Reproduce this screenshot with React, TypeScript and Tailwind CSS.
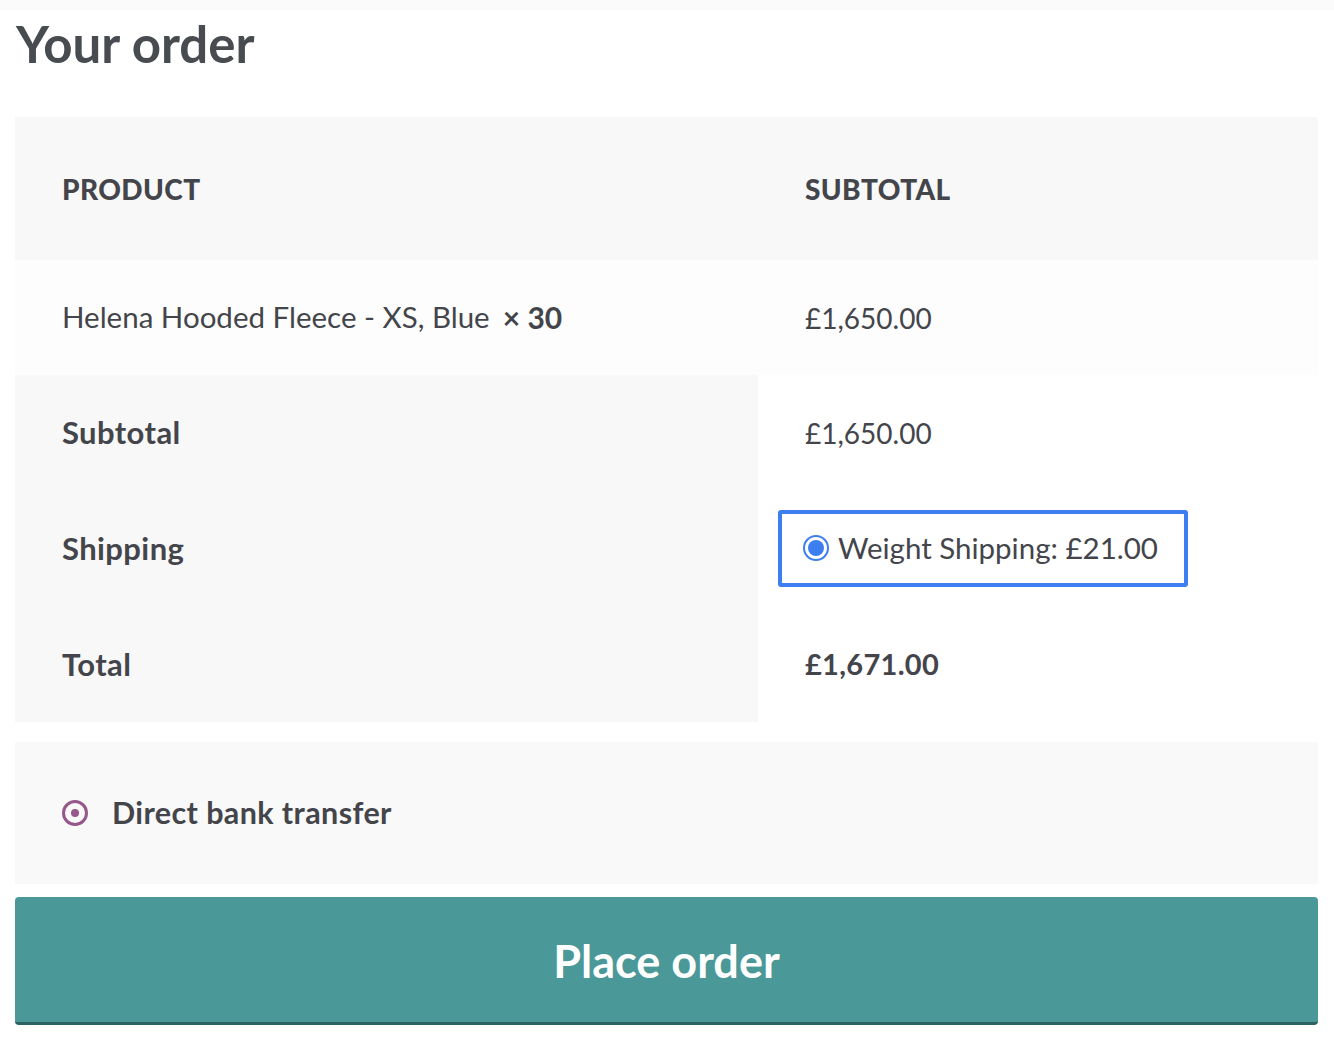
import React from "react";

export default function App() {
  const font = { fontFamily: "Lato, 'Noto Sans', sans-serif" };
  return (
    <div className="w-[1334px] h-[1042px] bg-white text-[#43454b]" style={font}>
      <div className="h-[10px] bg-[#fbfbfb]" />
      <div className="pl-[15px] pr-[16px]">
        <div className="h-[107px]">
          <h1 className="text-[51px] font-bold leading-none pt-[8px] pl-[1px] text-[#484c51]">Your order</h1>
        </div>
        <div className="grid grid-cols-[743px_1fr]">
          <div className="h-[143px] bg-[#f8f8f8] flex items-center pl-[47px] text-[28px] font-black tracking-[0.4px]">PRODUCT</div>
          <div className="h-[143px] bg-[#f8f8f8] flex items-center pl-[47px] text-[28px] font-black tracking-[0.4px]">SUBTOTAL</div>

          <div className="h-[115px] bg-[#fdfdfd] flex items-center pl-[47px] text-[29.5px]">
            <span>Helena Hooded Fleece - XS, Blue</span>
            <span className="font-bold ml-[13px] text-[30px]">× 30</span>
          </div>
          <div className="h-[115px] bg-[#fdfdfd] flex items-center pl-[47px] text-[28px]">£1,650.00</div>

          <div className="h-[115px] bg-[#f8f8f8] flex items-center pl-[47px] text-[31px] font-bold tracking-[0.4px]">Subtotal</div>
          <div className="h-[115px] bg-white flex items-center pl-[47px] text-[28px]">£1,650.00</div>

          <div className="h-[116px] bg-[#f8f8f8] flex items-center pl-[47px] text-[31px] font-bold tracking-[0.4px]">Shipping</div>
          <div className="h-[116px] bg-white flex items-center pl-[20px]">
            <div className="h-[77px] w-[410px] border-[4px] border-[#3d7ef0] rounded-[3px] flex items-center pl-[21px] text-[29.5px]">
              <span className="w-[26px] h-[26px] rounded-full border-[2px] border-[#3d7ef0] flex items-center justify-center mr-[9px]">
                <span className="w-[16px] h-[16px] rounded-full bg-[#3d7ef0]" />
              </span>
              <span>Weight Shipping: £21.00</span>
            </div>
          </div>

          <div className="h-[116px] bg-[#f8f8f8] flex items-center pl-[47px] text-[31px] font-bold tracking-[0.4px]">Total</div>
          <div className="h-[116px] bg-white flex items-center pl-[47px] text-[29px] font-bold tracking-[0.3px]">£1,671.00</div>
        </div>

        <div className="h-[20px]" />
        <div className="h-[142px] bg-[#f9f9f9] flex items-center pl-[47px]">
          <span className="w-[26px] h-[26px] rounded-full border-[3px] border-[#96588a] flex items-center justify-center mr-[24px]">
            <span className="w-[8px] h-[8px] rounded-full bg-[#96588a]" />
          </span>
          <span className="text-[30.5px] font-bold tracking-[0.4px]">Direct bank transfer</span>
        </div>
        <div className="h-[13px]" />
        <button className="w-full h-[128px] bg-[#4a9898] border-b-[3px] border-[#2d6262] rounded-[4px] text-white text-[45px] font-bold flex items-center justify-center pt-[5px]">
          Place order
        </button>
      </div>
    </div>
  );
}
